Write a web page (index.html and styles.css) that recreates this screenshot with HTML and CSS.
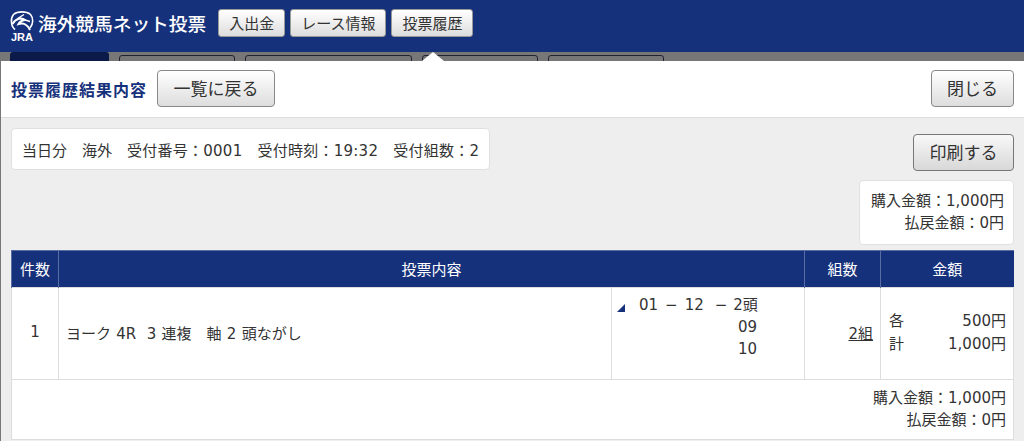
FILE: index.html
```html
<!DOCTYPE html>
<html lang="ja">
<head>
    <meta charset="UTF-8">
    <meta name="viewport" content="width=device-width, initial-scale=1.0">
    <title>海外競馬ネット投票</title>
    <link rel="stylesheet" href="styles.css">
</head>
<body>
    <div class="header">
        <div class="logo">
            <svg class="logo-mark" width="24" height="21" viewBox="0 0 24 21" fill="none" stroke="#fff">
                <path d="M5 18.500 C0.500 15 0.500 7 3.500 3.500 C7.500 0 16.500 0 20.500 3.500 C23.500 7 23.500 13 20 17" stroke-width="1.600"/>
                <path d="M2.500 13 C6 7 12 6.500 15 9 C11.500 9.500 9.500 11 8.500 13 C13 11.500 17.500 13.500 20 19" stroke-width="2"/>
                <path d="M14 3.500 L8.500 7 L20 10.500" stroke-width="1.400"/>
            </svg>
            <span class="logo-jra">JRA</span>
        </div>
        <div class="site-title">海外競馬ネット投票</div>
        <button class="nav-button">入出金</button>
        <button class="nav-button">レース情報</button>
        <button class="nav-button">投票履歴</button>
    </div>

    <div class="tab-strip">
        <div class="tab tab-active"></div>
        <div class="tab tab-1"></div>
        <div class="tab tab-2"></div>
        <div class="tab tab-1"></div>
        <div class="tab tab-1"></div>
        <div class="notch"></div>
    </div>

    <div class="modal">
        <div class="modal-head">
            <div class="modal-title">投票履歴結果内容</div>
            <button class="btn btn-back">一覧に戻る</button>
            <button class="btn btn-close">閉じる</button>
        </div>

        <div class="modal-body">
            <div class="toolbar">
                <div class="info-box">
                    <span>当日分</span>
                    <span>海外</span>
                    <span class="info-item">受付番号：0001</span>
                    <span class="info-item">受付時刻：19:32</span>
                    <span class="info-item">受付組数：2</span>
                </div>
                <div class="toolbar-right">
                    <button class="btn btn-print">印刷する</button>
                    <div class="amount-box">
                        <p>購入金額：1,000円</p>
                        <p>払戻金額：0円</p>
                    </div>
                </div>
            </div>

            <table class="result-table">
                <colgroup>
                    <col class="col-no">
                    <col>
                    <col class="col-horse">
                    <col class="col-sets">
                    <col class="col-money">
                </colgroup>
                <thead>
                    <tr>
                        <th>件数</th>
                        <th colspan="2">投票内容</th>
                        <th>組数</th>
                        <th>金額</th>
                    </tr>
                </thead>
                <tbody>
                    <tr class="bet-row">
                        <td class="cell-center">1</td>
                        <td class="cell-race">ヨーク 4R&nbsp; 3 連複　軸 2 頭ながし</td>
                        <td class="cell-horse">
                            <span class="corner"></span>
                            <div class="horse-line"><span>01</span><span class="dash">−</span><span>12</span><span class="dash dash-last">−</span><span>2頭</span></div>
                            <div class="horse-sub">09</div>
                            <div class="horse-sub">10</div>
                        </td>
                        <td class="cell-right"><a href="#" class="sets-link">2組</a></td>
                        <td class="cell-money">
                            <div class="money-line"><span>各</span><span>500円</span></div>
                            <div class="money-line"><span>計</span><span>1,000円</span></div>
                        </td>
                    </tr>
                    <tr>
                        <td colspan="5" class="total-cell">
                            <p>購入金額：1,000円</p>
                            <p>払戻金額：0円</p>
                        </td>
                    </tr>
                </tbody>
            </table>
        </div>
    </div>
</body>
</html>
```

FILE: styles.css
```css
* {
    margin: 0;
    padding: 0;
    box-sizing: border-box;
    font-family: "DejaVu Sans", "Noto Sans CJK JP", sans-serif;
}

body {
    background-color: #777;
    color: #333;
    font-size: 15px;
    height: 441px;
    overflow: hidden;
}

.header {
    display: flex;
    align-items: center;
    height: 52px;
    background: #16317b;
    padding: 0 0 6px 10px;
}

.logo {
    display: flex;
    flex-direction: column;
    align-items: center;
    width: 24px;
    margin-top: 6px;
    color: white;
}

.logo-jra {
    font-family: "Liberation Sans", sans-serif;
    font-size: 11px;
    font-weight: 700;
    line-height: 9px;
    margin-top: 1px;
}

.site-title {
    color: white;
    font-family: "Noto Sans CJK JP", sans-serif;
    font-size: 18.700px;
    font-weight: 500;
    margin: 0 12px 0 4px;
    padding-bottom: 1px;
    white-space: nowrap;
}

button {
    font-family: "Noto Sans CJK JP", sans-serif;
    color: #333;
    background: linear-gradient(#fff, #ddd);
    cursor: pointer;
}

.nav-button {
    height: 28px;
    padding: 0 10px 2px;
    margin-right: 5px;
    border: 1px solid #999;
    border-radius: 3px;
    font-size: 15px;
}

.tab-strip {
    position: relative;
    display: flex;
    gap: 10px;
    height: 9px;
    padding: 0 0 0 10px;
    background: #777;
    overflow: hidden;
}

.tab {
    height: 12px;
    margin-top: 3px;
    border: 1px solid #223;
    border-radius: 3px 3px 0 0;
}

.tab-active {
    width: 99px;
    margin-top: 0;
    background: #0c1a4a;
    border: none;
}

.tab-1 { width: 116px; }
.tab-2 { width: 167px; }

.notch {
    position: absolute;
    left: 422px;
    top: 0;
    width: 0;
    height: 0;
    border-left: 11px solid transparent;
    border-right: 11px solid transparent;
    border-bottom: 9px solid white;
}

.modal {
    margin-left: 1px;
    background: #eee;
    height: 380px;
}

.modal-head {
    display: flex;
    align-items: center;
    height: 57px;
    padding: 0 10px 1px 10px;
    background: white;
    border-bottom: 1px solid #ddd;
}

.modal-title {
    color: #16317b;
    font-family: "Noto Sans CJK JP", sans-serif;
    font-size: 16px;
    font-weight: 700;
    letter-spacing: 1px;
}

.btn {
    height: 37px;
    padding-bottom: 2px;
    border: 1px solid #888;
    border-radius: 4px;
    font-size: 17px;
}

.btn-back {
    width: 118px;
    margin-left: 10px;
}

.btn-close {
    width: 83px;
    margin-left: auto;
}

.modal-body {
    padding: 10px 10px 0 10px;
}

.toolbar {
    display: flex;
    justify-content: space-between;
    align-items: flex-start;
}

.info-box {
    display: flex;
    gap: 15px;
    height: 42px;
    align-items: center;
    padding: 0 10px;
    background: white;
    border: 1px solid #e0e0e0;
    border-radius: 4px;
    white-space: nowrap;
}

.info-item {
    letter-spacing: 0.250px;
}

.toolbar-right {
    display: flex;
    flex-direction: column;
    align-items: flex-end;
    padding-top: 6px;
}

.btn-print {
    width: 101px;
    border-color: #777;
    background: linear-gradient(#f8f8f8, #d8d8d8);
}

.amount-box {
    width: 155px;
    height: 65px;
    margin-top: 9px;
    padding: 9px 9px 0;
    text-align: right;
    line-height: 22px;
    background: white;
    border: 1px solid #e0e0e0;
    border-radius: 4px;
}

.result-table {
    width: 1003px;
    margin-top: 5px;
    border-collapse: collapse;
    table-layout: fixed;
    background: white;
}

.col-no { width: 47px; }
.col-horse { width: 193px; }
.col-sets { width: 76px; }
.col-money { width: 133px; }

.result-table th {
    height: 37px;
    padding-bottom: 2px;
    background: #16317b;
    color: white;
    font-weight: 400;
    border-left: 1px solid #5a6da3;
    border-top: 1px solid #5a6da3;
}

.result-table td {
    border: 1px solid #ddd;
    padding: 0 7px;
}

.bet-row td {
    height: 92px;
    padding-bottom: 3px;
}

.cell-center {
    text-align: center;
}

.cell-right {
    text-align: right;
}

.cell-race {
    word-spacing: 0.500px;
}

.result-table .cell-horse {
    position: relative;
    vertical-align: top;
    padding-top: 6px;
    line-height: 22px;
}

.corner {
    position: absolute;
    left: 5px;
    top: 16px;
    width: 0;
    height: 0;
    border-left: 8px solid transparent;
    border-bottom: 8px solid #16317b;
}

.horse-line {
    display: flex;
    padding-left: 20px;
}

.dash {
    margin: 0 7px;
}

.dash-last {
    margin-left: 11px;
    margin-right: 6px;
}

.horse-sub {
    padding-left: 119px;
}

.sets-link {
    color: #333;
}

.result-table .cell-money {
    padding: 0 7px 1px 8px;
}

.money-line {
    display: flex;
    justify-content: space-between;
    line-height: 23px;
}

.result-table .total-cell {
    height: 60px;
    padding-bottom: 2px;
    text-align: right;
    line-height: 22px;
}
```
